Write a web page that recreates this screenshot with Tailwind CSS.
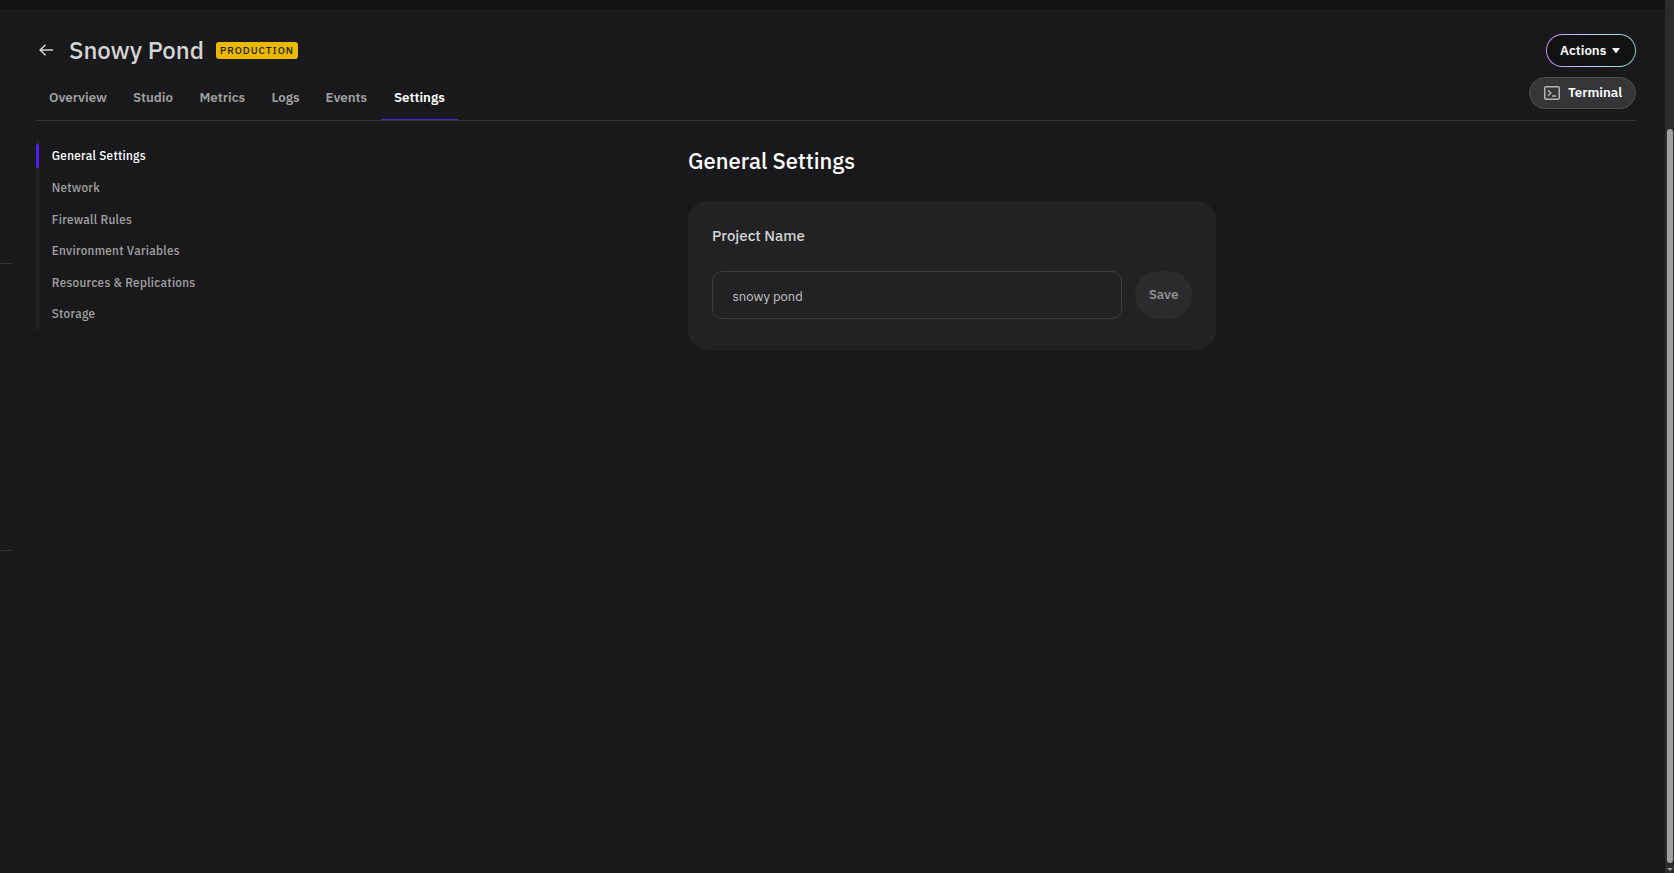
<!DOCTYPE html>
<html lang="en">
<head>
    <meta charset="UTF-8">
    <meta name="viewport" content="width=device-width, initial-scale=1.0">
    <title>Snowy Pond - Settings</title>
    <script src="https://cdn.jsdelivr.net/npm/@tailwindcss/browser@4"></script>
</head>
<body class="flex h-screen overflow-hidden bg-[#19191b] font-['IBM_Plex_Sans',Roboto,sans-serif] text-[13.3px] text-[#a1a1a1]">
    <!-- Collapsed sidebar dividers -->
    <div class="flex w-3 shrink-0 flex-col">
        <div class="h-[9px] bg-[#111111]"></div>
        <div class="mt-[254px] h-px bg-[#353536]"></div>
        <div class="mt-[286px] h-px bg-[#353536]"></div>
    </div>

    <div class="flex min-w-0 flex-1 flex-col">
        <div class="h-[9px] bg-[#111111]"></div>

        <header class="mr-[29px] ml-6 flex h-28 justify-between border-b border-[#353536]">
            <div class="flex flex-col">
                <div class="mt-[25px] flex h-8 items-center">
                    <svg class="ml-[3px] h-3 w-[14px]" viewBox="0 0 14 12" fill="none" stroke="#d4d4d4" stroke-width="1.5">
                        <path d="M14 6H1M6.5 .7 1.1 6l5.4 5.3" />
                    </svg>
                    <h1 class="ml-4 w-[134px] text-2xl font-medium whitespace-nowrap text-[#d4d4d4]">Snowy Pond</h1>
                    <span class="mt-px ml-[13px] flex h-[17px] w-[82px] items-center justify-center rounded-[3px] bg-[#e8b900] text-[10px] font-medium tracking-[1px] text-[#222]">PRODUCTION</span>
                </div>
                <nav class="mt-[9px] flex h-[46px] font-semibold">
                    <a class="flex w-[84px] items-center pl-[13px]">Overview</a>
                    <a class="flex w-[66.5px] items-center pl-[13px]">Studio</a>
                    <a class="flex w-[72px] items-center pl-[13px]">Metrics</a>
                    <a class="flex w-[54px] items-center pl-[13px]">Logs</a>
                    <a class="flex w-[68.5px] items-center pl-[13px]">Events</a>
                    <a class="flex w-[77px] items-center border-b border-[#4a28d4] pt-px pl-[13px] text-white">Settings</a>
                </nav>
            </div>

            <div class="mt-[25px] flex flex-col items-end gap-[10px]">
                <div class="h-[33px] w-[90px] rounded-full bg-linear-to-r from-[#c893f5] via-[#c0d0ff] to-[#83d6c0] p-px">
                    <button class="flex h-full w-full items-center rounded-full bg-[#111111] pl-[13px] font-semibold text-white">
                        Actions
                        <svg class="ml-[5.5px] h-[5px] w-2" viewBox="0 0 8 5" fill="#fff"><path d="M.7 0h6.6q.7 0 .4.6L4.5 4.7q-.5.5-1 0L.3.6Q0 0 .7 0" /></svg>
                    </button>
                </div>
                <button class="flex h-8 w-[107px] items-center rounded-full border border-[#505052] bg-[#353537] pl-[14px] font-semibold text-white">
                    <svg class="h-[14px] w-4" viewBox="0 0 16 14" fill="none" stroke="#b5b5b6" stroke-width="1.5">
                        <rect x=".75" y=".75" width="14.5" height="12.5" rx="1.5" />
                        <path d="m4 4.3 2.8 2.7L4 9.7M8 10h4" />
                    </svg>
                    <span class="mb-px ml-2">Terminal</span>
                </button>
            </div>
        </header>

        <main class="flex">
            <nav class="mt-[19px] ml-6 flex h-[190px] w-[652px] shrink-0 font-['IBM_Plex_Sans_Condensed','IBM_Plex_Sans',Roboto,sans-serif] text-[13px] font-medium tracking-[0.3px]">
                <div class="h-full w-[3px] rounded-full bg-[#222224] pt-1">
                    <div class="h-6 rounded-xs bg-[#4f1ff0]"></div>
                </div>
                <ul class="mt-[0.4px] ml-[12.8px]">
                    <li class="flex h-[31.6px] items-center text-white">General Settings</li>
                    <li class="flex h-[31.6px] items-center">Network</li>
                    <li class="flex h-[31.6px] items-center">Firewall Rules</li>
                    <li class="flex h-[31.6px] items-center">Environment Variables</li>
                    <li class="flex h-[31.6px] items-center">Resources &amp; Replications</li>
                    <li class="flex h-[31.6px] items-center">Storage</li>
                </ul>
            </nav>

            <section class="w-[528px] pt-[24px]">
                <h2 class="h-8 text-[22px] leading-8 font-medium text-white">General Settings</h2>
                <div class="mt-6 h-[149px] rounded-[20px] bg-[#222224] px-6 pt-6">
                    <h3 class="h-[22px] text-[15px] leading-[22px] font-medium text-[#d4d4d4]">Project Name</h3>
                    <div class="mt-6 flex gap-[13px]">
                        <input type="text" value="snowy pond" class="h-12 w-[410px] rounded-[10px] border border-[#3c3c3e] px-[19.5px] pt-[3px] text-[13px] text-[#c4c4c4] outline-none">
                        <button class="h-12 w-[57px] rounded-[24px] bg-[#2b2b2d] pb-px font-semibold text-[#8e8e8e]">Save</button>
                    </div>
                </div>
            </section>
        </main>
    </div>

    <!-- Scrollbar -->
    <div class="flex w-[9px] shrink-0 flex-col items-center bg-[#2c2c2c] pt-[129px]">
        <div class="h-[734px] w-[6px] rounded-full bg-[#9f9f9f]"></div>
        <svg class="mt-[5px] h-[3px] w-[6px]" viewBox="0 0 6 3" fill="#9f9f9f"><path d="M0 0h6L3 3z" /></svg>
    </div>
</body>
</html>
